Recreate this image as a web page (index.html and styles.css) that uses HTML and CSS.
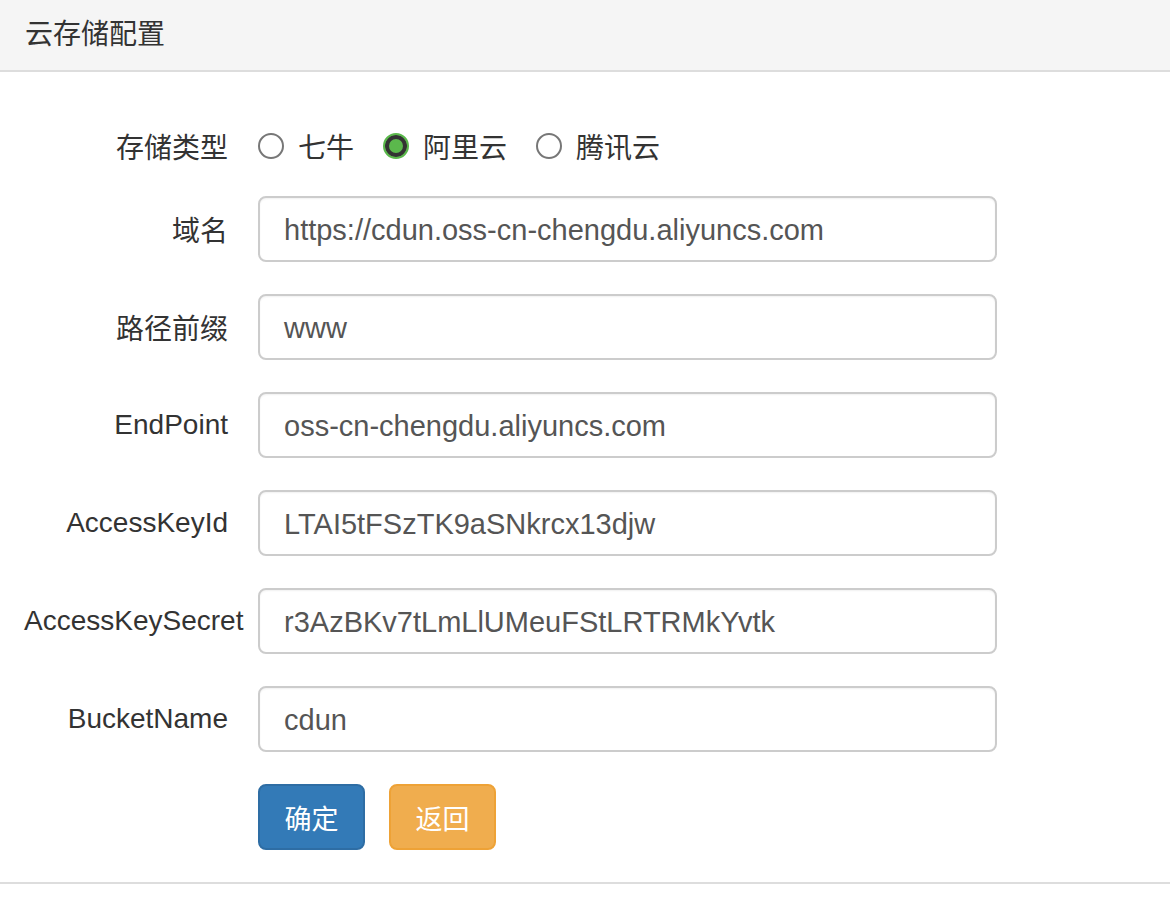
FILE: index.html
```html
<!DOCTYPE html>
<html lang="zh-CN">
<head>
<meta charset="utf-8">
<title>云存储配置</title>
<link rel="stylesheet" href="styles.css">
</head>
<body>
<div class="panel">
  <div class="panel-heading">云存储配置</div>
  <div class="panel-body">
    <div class="form-row radio-row">
      <div class="label">存储类型</div>
      <div class="radios">
        <span class="radio-item"><span class="radio"></span><span class="radio-text">七牛</span></span>
        <span class="radio-item"><span class="radio checked"></span><span class="radio-text">阿里云</span></span>
        <span class="radio-item"><span class="radio"></span><span class="radio-text">腾讯云</span></span>
      </div>
    </div>
    <div class="form-row">
      <div class="label">域名</div>
      <div class="input">https://cdun.oss-cn-chengdu.aliyuncs.com</div>
    </div>
    <div class="form-row">
      <div class="label">路径前缀</div>
      <div class="input">www</div>
    </div>
    <div class="form-row">
      <div class="label">EndPoint</div>
      <div class="input">oss-cn-chengdu.aliyuncs.com</div>
    </div>
    <div class="form-row">
      <div class="label">AccessKeyId</div>
      <div class="input">LTAI5tFSzTK9aSNkrcx13djw</div>
    </div>
    <div class="form-row">
      <div class="label">AccessKeySecret</div>
      <div class="input">r3AzBKv7tLmLlUMeuFStLRTRMkYvtk</div>
    </div>
    <div class="form-row">
      <div class="label">BucketName</div>
      <div class="input">cdun</div>
    </div>
    <div class="form-row buttons-row">
      <div class="label"></div>
      <div class="buttons">
        <button class="btn btn-primary">确定</button>
        <button class="btn btn-warning">返回</button>
      </div>
    </div>
  </div>
</div>
</body>
</html>
```
FILE: styles.css
```css
* { box-sizing: border-box; }
html, body { margin: 0; padding: 0; background: #fff; }
body {
  font-family: "Liberation Sans", "Noto Sans CJK SC", sans-serif;
  font-size: 28px;
  color: #333;
}
.panel {
  border-bottom: 2px solid #ddd;
  box-shadow: 0 3px 6px rgba(0,0,0,0.05);
}
.panel-heading {
  height: 72px;
  background: #f5f5f5;
  border-bottom: 2px solid #ddd;
  padding-left: 25px;
  line-height: 64px;
  font-family: "Noto Sans CJK SC", sans-serif;
  font-size: 28px;
  color: #333;
}
.panel-body {
  padding: 41px 0 32px 0;
}
.form-row {
  display: flex;
  align-items: center;
  height: 66px;
  margin-bottom: 32px;
}
.radio-row { margin-bottom: 17px; }
.buttons-row { margin-bottom: 0; }
.label {
  flex: 0 0 258px;
  width: 258px;
  padding-left: 24px;
  padding-right: 30px;
  text-align: right;
  white-space: nowrap;
  color: #333;
  font-family: "Liberation Sans", "Noto Sans CJK SC", sans-serif;
}
.input {
  width: 739px;
  height: 66px;
  border: 2px solid #ccc;
  border-radius: 8px;
  padding: 2px 24px 0 24px;
  display: flex;
  align-items: center;
  color: #555;
  font-size: 29px;
  box-shadow: inset 0 1px 2px rgba(0,0,0,0.06);
}
.radios {
  display: flex;
  align-items: center;
  gap: 29px;
}
.radio-item {
  display: flex;
  align-items: center;
  gap: 14px;
}
.radio {
  width: 26px;
  height: 26px;
  border-radius: 50%;
  border: 2px solid #777;
  background: #fff;
}
.radio.checked {
  border: 2px solid #5bb84c;
  background: #5bb84c;
  box-shadow: inset 0 0 0 4px #333;
}
.radio-text {
  font-family: "Noto Sans CJK SC", sans-serif;
}
.buttons {
  display: flex;
  gap: 24px;
}
.btn {
  height: 66px;
  padding: 0 24px;
  font-family: "Noto Sans CJK SC", sans-serif;
  font-size: 27px;
  color: #fff;
  border-radius: 8px;
  border: 2px solid transparent;
  cursor: pointer;
}
.btn-primary { background: #337ab7; border-color: #2e6da4; width: 107px; }
.btn-warning { background: #f0ad4e; border-color: #eea236; width: 107px; }
```
